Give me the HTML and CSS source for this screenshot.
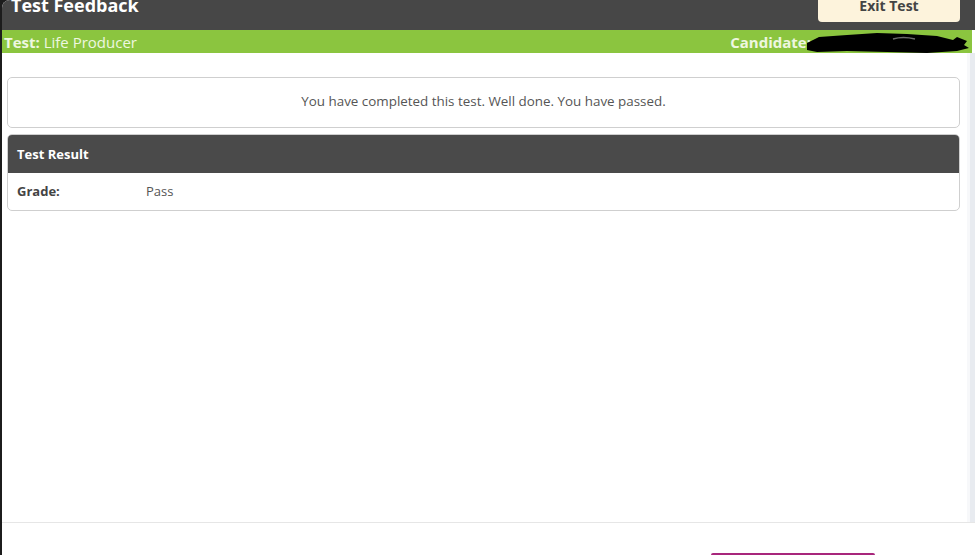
FILE: index.html
```html
<!DOCTYPE html>
<html lang="en">
<head>
    <meta charset="UTF-8">
    <meta name="viewport" content="width=device-width, initial-scale=1.0">
    <title>Test Feedback</title>
    <link rel="stylesheet" href="styles.css">
</head>
<body>
    <div class="frame">
        <header class="top-bar">
            <h1>Test Feedback</h1>
            <button class="exit-btn">Exit Test</button>
        </header>

        <div class="info-bar">
            <span><b>Test:</b> Life Producer</span>
            <span class="candidate"><b>Candidate:</b>
                <svg class="redact" width="162" height="20" viewBox="0 0 162 20">
                    <path d="M0 10 L12 4 L40 2 L70 0 L100 1 L130 3 L146 7 L150 4 L160 8 L157 12 L162 15 L150 18 L120 20 L80 19 L40 18 L10 19 L0 17 Z" fill="#000"/>
                    <path d="M86 6 Q96 3 108 6" stroke="#6a6a6a" stroke-width="1.5" fill="none"/>
                </svg>
            </span>
        </div>

        <div class="main">
            <div class="content">
                <div class="panel message">
                    You have completed this test. Well done. You have passed.
                </div>

                <div class="panel result">
                    <div class="result-head">Test Result</div>
                    <div class="result-row">
                        <span class="result-label">Grade:</span>
                        <span>Pass</span>
                    </div>
                </div>
            </div>
            <div class="scroll-strip"></div>
        </div>

        <footer class="foot">
            <div class="foot-btn"></div>
        </footer>
    </div>
</body>
</html>
```

FILE: styles.css
```css
html, body {
    margin: 0;
    height: 100%;
    background-color: #1c1c1c;
}
body {
    font-family: "Open Sans", "Noto Sans", sans-serif;
    color: #555;
    overflow: hidden;
}
.frame {
    margin-left: 2px;
    height: 555px;
    background-color: #fff;
    border-top-left-radius: 8px;
    overflow: hidden;
    display: flex;
    flex-direction: column;
}
.top-bar {
    height: 30px;
    background-color: #474747;
    display: flex;
    justify-content: space-between;
    align-items: flex-start;
    padding: 0 15px 0 9px;
}
.top-bar h1 {
    margin: -7px 0 0 0;
    font-size: 18px;
    font-weight: 700;
    color: #fff;
    line-height: 24px;
}
.exit-btn {
    margin-top: -10px;
    width: 142px;
    height: 32px;
    border: none;
    border-radius: 4px;
    background-color: #fdf3dc;
    color: #444;
    font-family: inherit;
    font-size: 14px;
    font-weight: 700;
    padding: 0;
    line-height: 22px;
}
.info-bar {
    height: 23px;
    background-color: #8bc53f;
    color: #eef7e0;
    font-size: 15px;
    display: flex;
    justify-content: space-between;
    align-items: center;
    padding: 0 3px 0 2px;
    margin-right: 3px;
}
.info-bar b {
    font-weight: 700;
}
.candidate {
    display: flex;
    align-items: center;
}
.redact {
    margin-left: -4px;
    margin-top: 3px;
}
.main {
    flex: 1;
    display: flex;
    border-bottom: 1px solid #e6e6e6;
}
.content {
    flex: 1;
    padding: 24px 7px 0 5px;
}
.scroll-strip {
    width: 5px;
    background-color: #e8ebf0;
    border-left: 3px solid #f7f8fa;
}
.panel {
    border: 1px solid #cfcfcf;
    border-radius: 5px;
    background-color: #fff;
    overflow: hidden;
}
.message {
    display: flex;
    align-items: center;
    justify-content: center;
    font-size: 13.4px;
    color: #555;
    padding-bottom: 4px;
    box-sizing: border-box;
    height: 51px;
}
.result {
    margin-top: 6px;
}
.result-head {
    height: 38px;
    background-color: #4a4a4a;
    color: #fff;
    font-size: 13px;
    font-weight: 700;
    display: flex;
    align-items: center;
    padding-left: 9px;
    padding-bottom: 1px;
    box-sizing: border-box;
}
.result-row {
    height: 37px;
    display: flex;
    align-items: center;
    padding-left: 9px;
    padding-bottom: 2px;
    box-sizing: border-box;
    font-size: 13px;
}
.result-label {
    width: 129px;
    font-weight: 700;
    color: #444;
}
.foot {
    height: 32px;
    background-color: #fff;
    display: flex;
    align-items: flex-end;
    padding-left: 709px;
}
.foot-btn {
    width: 164px;
    height: 2px;
    background-color: #a8267c;
    border-radius: 3px 3px 0 0;
}
```
